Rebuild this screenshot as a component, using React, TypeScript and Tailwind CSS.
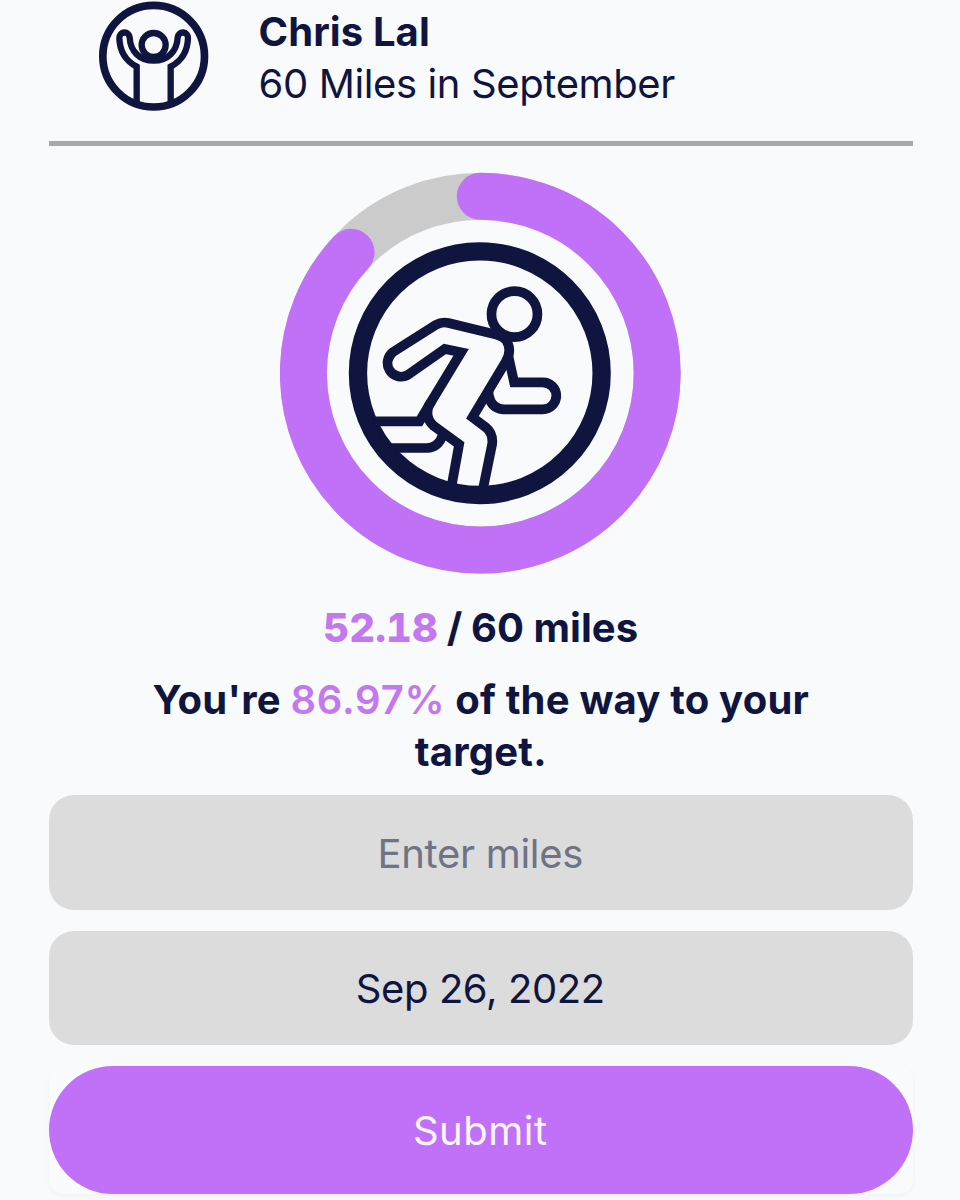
import React from "react";

const NAVY = "#101540";
const PURPLE = "#c170f8";

function CheerIcon() {
  return (
    <svg className="block h-[112px] w-[112px]" viewBox="24 0 336 336" fill="none" stroke={NAVY} aria-hidden="true">
      <circle cx="191" cy="168.5" r="152.5" strokeWidth="23" />
      <circle cx="191" cy="135" r="36" strokeWidth="19" />
      <path
        strokeWidth="19"
        d="M140 312V200C106 182 89 153 88 114A15.5 15.5 0 0 1 119 112C121 155 150 182 191 182C232 182 261 155 263 112A15.5 15.5 0 0 1 294 114C293 153 276 182 242 200V312"
      />
    </svg>
  );
}

function ProgressRing({ value }: { value: number }) {
  return (
    <svg className="block h-[402px] w-[402px]" viewBox="280.2 172 402 402" fill="none" aria-hidden="true">
      <circle cx="480.5" cy="373.2" r="176.9" stroke="#cbcbcb" strokeWidth="47" />
      <circle
        cx="480.5"
        cy="373.2"
        r="176.9"
        stroke={PURPLE}
        strokeWidth="47"
        strokeLinecap="round"
        pathLength="100"
        strokeDasharray={`${value} 100`}
        transform="rotate(-90 480.5 373.2)"
      />
      <g transform="translate(340 230) scale(0.33333)" stroke={NAVY} strokeWidth="29">
        <circle cx="420" cy="429.5" r="365.5" strokeWidth="55" />
        <circle cx="524" cy="252.5" r="69" />
        <path d="M430 775L457 643Q461 611 438 592L398 562L497 397C512 372 511 350 500 332Q490 319 467 313L326 279Q306 274 288 285L160 366A41 41 0 0 0 204 435L315 357L364 367L267 527Q254 564 282 588L358 643L335 770" />
        <path d="M100 574H239L275 514" />
        <path d="M145 654H262Q296 653 309 615" />
        <path d="M506 380L523 457H609A40.5 40.5 0 0 1 609 538H490Q447 534 446 482" />
      </g>
    </svg>
  );
}

export default function App() {
  return (
    <main className="flex h-[1200px] w-[960px] flex-col overflow-hidden bg-[#f8fafc] pl-[49px] pr-[47.5px] font-['Inter',sans-serif] text-[40px] leading-[52px] text-[#101540]">
      <header className="flex h-[146px] shrink-0 items-start border-b-[5px] border-[#a8a8a8] pl-[48.5px]">
        <CheerIcon />
        <div className="ml-[49px] mt-[6px] whitespace-nowrap">
          <h1 className="font-bold tracking-[0.1px]">Chris Lal</h1>
          <p className="tracking-[-0.38px]">60 Miles in September</p>
        </div>
      </header>

      <section className="flex shrink-0 flex-col items-center pt-[26px]">
        <ProgressRing value={86.97} />
        <p className="mt-[27.5px] whitespace-nowrap font-bold tracking-[0.05px]">
          <span className="font-extrabold tabular-nums tracking-[0.1px] text-[#c478ef]">52.18</span>
          <span className="tracking-[-0.5px]"> / </span>60 miles
        </p>
        <p className="mt-[20px] whitespace-nowrap text-center font-bold tracking-[0.2px]">
          You're <span className="font-semibold tracking-[0.8px] text-[#c478ef]">86.97%</span> of the way to your
          <br />
          target.
        </p>
      </section>

      <form className="mt-[17.5px] flex shrink-0 flex-col gap-[21px]" onSubmit={(e) => e.preventDefault()}>
        <input
          aria-label="Miles"
          placeholder="Enter miles"
          className="h-[114.5px] w-full rounded-[25px] bg-[#dcdcdc] pt-[2px] pr-[1px] text-center tracking-[-0.3px] outline-none placeholder:text-[#6e7385]"
        />
        <button type="button" className="h-[114.5px] w-full rounded-[25px] bg-[#dcdcdc] pt-[2px] pr-[1px] text-center tracking-[-0.4px]">
          Sep 26, 2022
        </button>
        <div className="rounded-[14px] bg-[#fafbfc] shadow-[0_2px_4px_rgba(0,0,0,0.04)]">
          <button type="submit" className="block h-[127.5px] w-full rounded-[64px] bg-[#c170f8] pt-[2px] pr-[1px] text-center tracking-[0.5px] text-[#faf6ff]">
            Submit
          </button>
        </div>
      </form>
    </main>
  );
}
